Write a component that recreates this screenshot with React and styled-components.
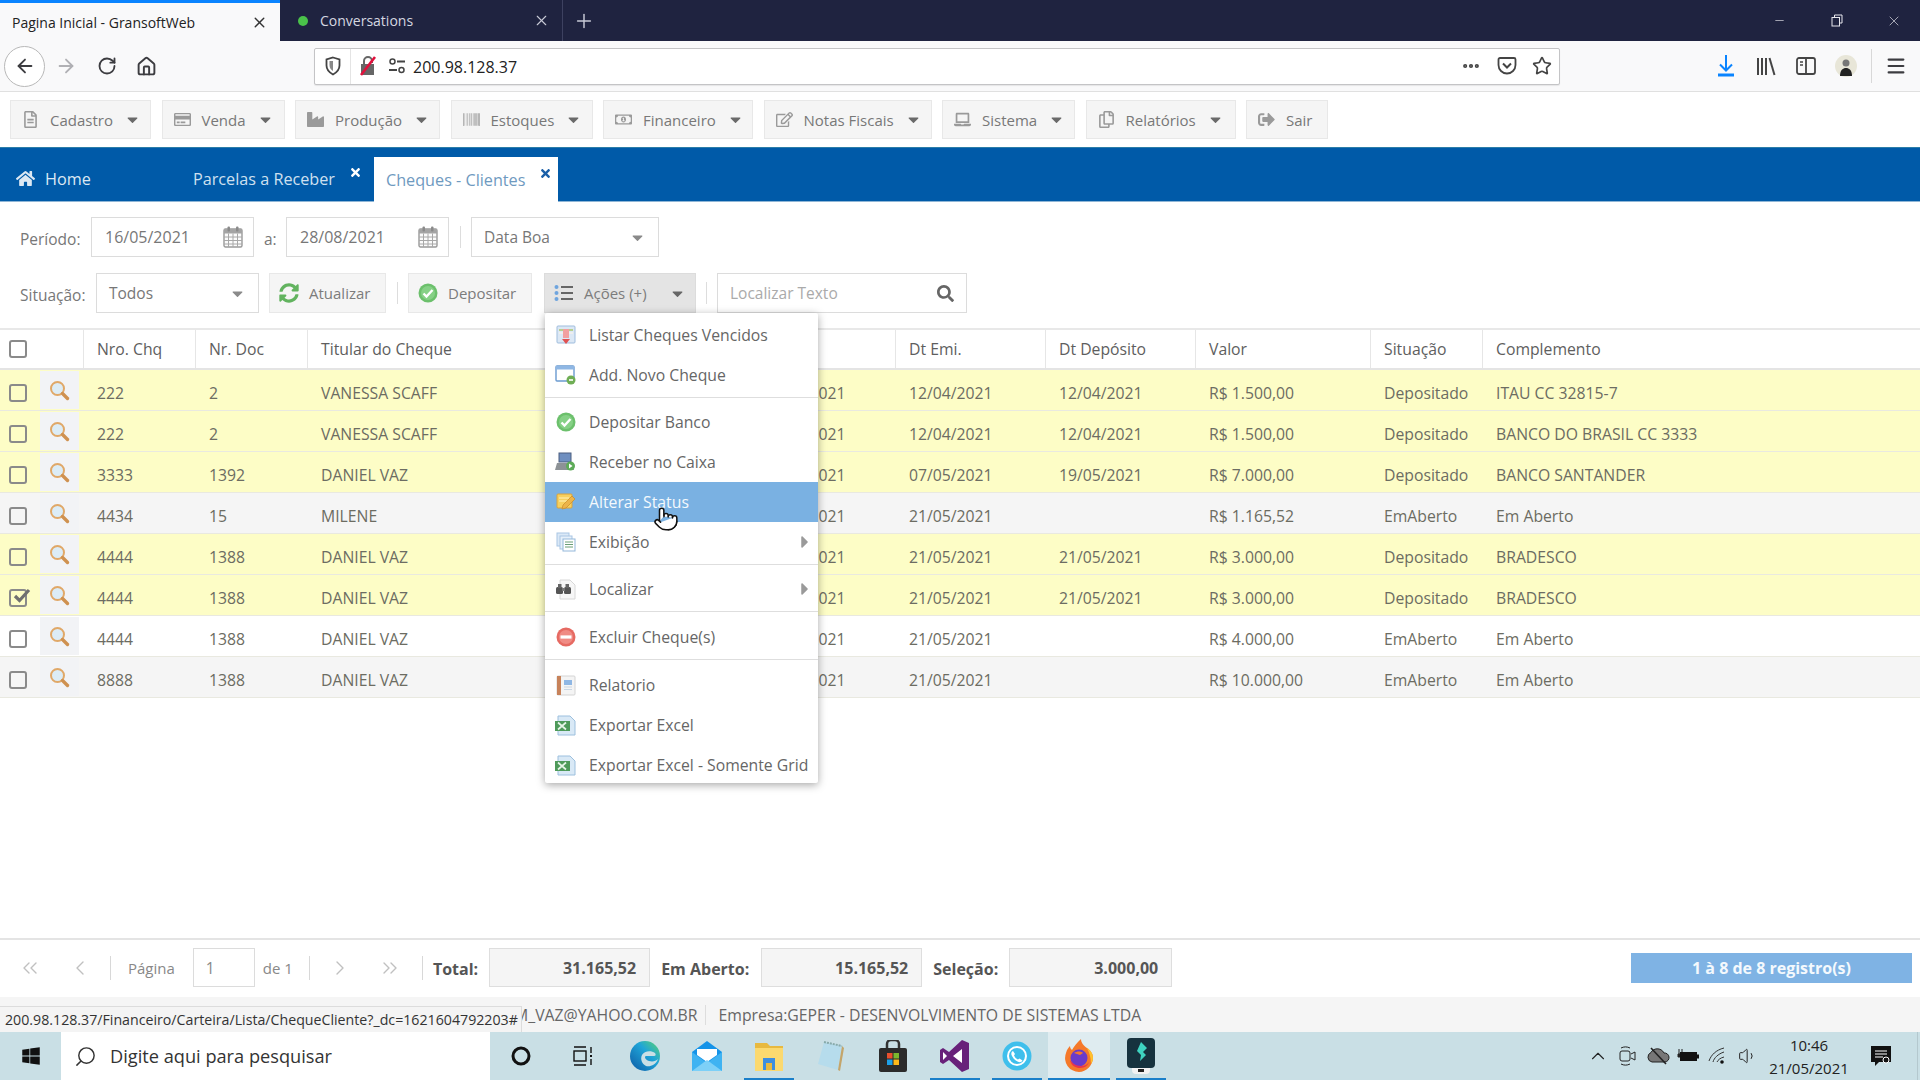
import React from 'react';
import styled, { createGlobalStyle } from 'styled-components';
import { ArrowLeft, ArrowRight, RotateCw, Home as HomeIcon, MoreHorizontal, Star, Menu as MenuLines, Minus, X, Plus, Pointer, ChevronUp, Volume1, ChevronsLeft, ChevronLeft, ChevronRight, ChevronsRight, Search as SearchLine } from 'lucide-react';
import { FaRegFileAlt, FaRegCreditCard, FaIndustry, FaBarcode, FaRegMoneyBillAlt, FaRegEdit, FaLaptop, FaRegCopy, FaSignOutAlt, FaCaretDown, FaHome, FaTimes, FaSearch, FaSyncAlt, FaCaretRight, FaWindows } from 'react-icons/fa';

const Global = createGlobalStyle`
  html, body { margin: 0; padding: 0; background: #fff; }
  * { box-sizing: border-box; }
  body { font-family: "Open Sans", "Liberation Sans", sans-serif; }
`;

const Page = styled.div`
  width: 1920px; height: 1080px; display: flex; flex-direction: column; overflow: hidden; background: #fff;
`;

/* browser chrome */
const TabStrip = styled.div`display: flex; height: 41px; background: #1f2340; align-items: stretch; flex: none;`;
const BrowserTab = styled.div`
  width: ${p => p.$w}px; display: flex; align-items: center; font-size: 14px; padding: 0 12px;
  color: ${p => p.$active ? '#222' : '#d5d7e0'};
  background: ${p => p.$active ? '#f9f9fa' : 'transparent'};
  border-top: ${p => p.$active ? '3px solid #0a84ff' : 'none'};
  border-right: ${p => p.$active ? 'none' : '1px solid #3d4160'};
  span { flex: 1; white-space: nowrap; }
`;
const TabDot = styled.i`width: 10px; height: 10px; border-radius: 50%; background: #4ac24a; margin: 0 12px 0 6px;`;
const NewTab = styled.div`width: 41px; display: flex; align-items: center; justify-content: center; color: #c8cad6;`;
const WinControls = styled.div`margin-left: auto; margin-right: -2px; display: flex; align-items: center; color: #e8e8ee;`;
const WinBtn = styled.div`width: 57px; height: 38px; display: flex; align-items: center; justify-content: center;`;

const ToolBar = styled.div`display: flex; height: 51px; flex: none; background: #f9f9fa; border-bottom: 1px solid #e0e0e0; align-items: center; padding-left: 4px; color: #3c3c40;`;
const BackBtn = styled.div`width: 41px; height: 41px; flex: none; border-radius: 50%; border: 1px solid #b8b8b8; background: #fff; display: flex; align-items: center; justify-content: center;`;
const NavCell = styled.div`width: ${p => p.$w}px; flex: none; display: flex; justify-content: center; align-items: center; color: ${p => p.$dim ? '#b0b0b4' : 'inherit'};`;
const UrlBar = styled.div`
  width: 1246px; height: 37px; margin-left: 148px; flex: none; background: #fff; border: 1px solid #c4c4c6; border-radius: 2px;
  display: flex; align-items: center; font-size: 16px; color: #222; box-shadow: 0 1px 1px rgba(0,0,0,.08);
`;
const UrlCell = styled.div`
  width: ${p => p.$w}px; height: 100%; display: flex; align-items: center; justify-content: center; flex: none;
  border-right: ${p => p.$line ? '1px solid #e4e4e4' : 'none'}; color: #444;
`;
const UrlText = styled.span`margin-left: 4px; flex: 1; padding-top: 2px;`;
const ToolCells = styled.div`display: flex; align-items: center; margin-left: 146px; flex: none;`;
const ToolDivider = styled.i`width: 1px; height: 34px; background: #d8d8d8; margin-left: 5px;`;

/* app menu */
const AppMenu = styled.nav`display: flex; height: 55px; flex: none; padding: 8px 0 0 10px; gap: 10.5px; background: #fff;`;
const AppBtn = styled.div`
  width: ${p => p.$w}px; height: 39px; background: #f5f5f5; border: 1px solid #e8e8e8; display: flex; align-items: center;
  padding: 0 12px 0 11px; gap: 11px; font-size: 15px; color: #787878; white-space: nowrap;
  svg { flex: none; color: #9a9a9a; }
  svg:last-child:not(:first-child) { color: #6a6a6a; margin-left: auto; }
`;

const TabBar = styled.div`
  display: flex; height: 55px; flex: none; background: #005aa8; border-top: 1px solid #2d7ea8; border-bottom: 1px solid #8fb6d6; align-items: flex-end;
  font-size: 16.2px; color: #cfe0f0;
`;
const HomeTab = styled.div`width: 193px; height: 45px; display: flex; align-items: center; padding-left: 16px; gap: 10px; color: #dce8f3;`;
const OpenTab = styled.div`
  position: relative; height: 45px; width: ${p => p.$w}px; display: flex; align-items: center;
  padding-left: ${p => p.$active ? 12 : 0}px; white-space: nowrap;
  background: ${p => p.$active ? '#fff' : 'transparent'};
  color: ${p => p.$active ? '#6f9abf' : '#cfe0f0'};
  margin-bottom: ${p => p.$active ? -1 : 0}px;
`;
const TabClose = styled.span`
  position: absolute; right: ${p => p.$r}px; top: 10px; display: flex;
  color: ${p => p.$active ? '#1a5fa8' : '#fff'};
`;

/* filters */
const Filters = styled.div`display: flex; flex-direction: column; gap: 16px; padding: 15px 0 0 0; height: 126px; flex: none;`;
const FilterRow = styled.div`display: flex; align-items: center; height: 40px; font-size: 15.5px; color: #777;`;
const Label = styled.span`width: ${p => p.$w}px; padding-left: ${p => p.$pl}px; flex: none; padding-top: 3px;`;
const Field = styled.div`
  width: ${p => p.$w}px; height: 40px; border: 1px solid #dcdcdc; display: flex; align-items: center; flex: none;
  padding: 0 ${p => p.$pr ?? 12}px 0 12px; background: #fff; color: #777; justify-content: space-between; white-space: nowrap;
  svg { color: #8a8a8a; }
`;
const DateText = styled.span`font-size: 16px; margin-left: 1px;`;
const Placeholder = styled.span`color: #aaa;`;
const VSep = styled.i`width: 1px; height: 22px; background: #ddd; margin: 0 ${p => p.$r}px 0 ${p => p.$l}px; flex: none;`;
const Btn = styled.div`
  position: ${p => p.$rel ? 'relative' : 'static'};
  width: ${p => p.$w}px; height: 40px; background: ${p => p.$on ? '#e4e4e4' : '#f5f5f5'}; border: 1px solid ${p => p.$on ? '#dcdcdc' : '#e8e8e8'};
  display: flex; align-items: center; gap: ${p => p.$gap ?? 10}px; padding-left: 9px; flex: none; margin-left: ${p => p.$ml || 0}px; color: #7c7c7c; font-size: 15px;
`;
const Caret = styled.span`margin-left: auto; margin-right: 9px; display: flex; color: #666;`;

/* grid */
const COLS = '83px 112px 112px 441px 147px 150px 150px 175px 112px 1fr';
const Table = styled.div`flex: 1; position: relative;`;
const HeadRow = styled.div`display: grid; grid-template-columns: ${COLS}; height: 42px; border-top: 2px solid #e8e8e8; border-bottom: 2px solid #e4e4e4;`;
const HeadCell = styled.div`
  display: flex; align-items: center; padding: 0 0 0 ${p => p.$first ? 9 : 13}px; font-size: 15.75px; color: #5e5e5e;
  border-left: ${p => p.$first ? 'none' : '1px solid #e6e6e6'}; white-space: nowrap;
`;
const Row = styled.div`
  display: grid; grid-template-columns: ${COLS}; height: 41px; border-bottom: 1px solid #e9e9e0;
  background: ${p => p.$bg};
`;
const Cell = styled.div`display: flex; align-items: center; padding: 6px 0 0 14px; font-size: 15.75px; color: #6c6c62; white-space: nowrap;`;
const SelCell = styled.div`display: flex; align-items: stretch;`;
const CheckWrap = styled.div`width: 40px; display: flex; align-items: center; padding: 6px 0 0 9px;`;
const LensCell = styled.div`width: 39px; background: #f2f3f6; margin: 1px 0; display: flex; justify-content: center; align-items: center;`;
const Check = styled.span`
  position: relative; width: 18px; height: 18px; border: 2px solid #8a8a8a; border-radius: 3px; background: ${p => p.$plain ? '#fff' : 'transparent'}; display: flex; flex: none;
`;
const TickMark = styled.span`position: absolute; left: 1px; top: -3px; display: flex;`;

/* dropdown */
const Dropdown = styled.div`
  position: absolute; left: 0; top: 39px; width: 273px; height: 470px; background: #fff; padding-top: 2px; z-index: 5;
  box-shadow: 0 2px 8px rgba(0,0,0,.35); border-radius: 2px; color: #666;
`;
const DItem = styled.div`
  position: relative; height: 40px; display: flex; align-items: center; padding-left: 10px; gap: 13px; font-size: 15.75px; white-space: nowrap;
  background: ${p => p.$active ? '#7ab1e2' : 'transparent'}; color: ${p => p.$active ? '#f4f9fd' : '#666'};
`;
const DIcon = styled.span`width: 21px; display: flex; justify-content: center; flex: none;`;
const DSep = styled.div`height: 1px; background: #dedede; margin: ${p => p.$t ?? 2}px 0 ${p => p.$b ?? 4}px;`;
const DArrow = styled.span`position: absolute; right: 3px; top: 10px; display: flex; color: #9a9a9a;`;
const HandCursor = styled.span`position: absolute; left: 108px; top: 24px; display: flex; color: #111; z-index: 6;`;

/* pager */
const Pager = styled.div`display: flex; align-items: center; height: 59px; padding-bottom: 2px; border-top: 2px solid #e4e4e4; flex: none; font-size: 15px; color: #888;`;
const PagerIcon = styled.span`width: ${p => p.$w}px; display: flex; justify-content: center; flex: none; color: #c0c0c0;`;
const PagerSep = styled.i`width: 1px; height: 24px; background: #d8d8d8; flex: none; margin-left: ${p => p.$l || 0}px;`;
const PagerText = styled.span`margin: 0 ${p => p.$r}px 0 ${p => p.$l}px; white-space: nowrap; flex: none;`;
const PageInput = styled.div`width: 62px; height: 39px; border: 1px solid #dcdcdc; padding-left: 12px; display: flex; align-items: center; flex: none; font-size: 15.5px;`;
const TotalLabel = styled.b`font-size: 16px; color: #555; margin: 3px ${p => p.$r}px 0 ${p => p.$l}px; white-space: nowrap; flex: none;`;
const TotalBox = styled.div`
  width: ${p => p.$w}px; height: 39px; background: #f5f5f5; border: 1px solid #dedede; display: flex; align-items: center; justify-content: flex-end;
  padding-right: 13px; font-size: 16px; font-weight: 700; color: #555; flex: none;
`;
const Records = styled.div`
  margin-left: auto; margin-right: 8px; width: 281px; height: 30px; background: #7fb3e4; color: #f4f9fd; font-weight: 700; font-size: 16px;
  display: flex; align-items: center; justify-content: center;
`;

/* status */
const StatusBar = styled.div`
  position: relative; height: 35px; background: #f5f5f5; display: flex; align-items: center; flex: none; font-size: 15.8px; color: #666;
  padding: 0 0 0 514px; white-space: nowrap;
`;
const StatusSep = styled.i`width: 1px; height: 20px; background: #ddd; margin: 0 12px 0 8px;`;
const UrlTip = styled.div`
  position: absolute; left: 0; bottom: 0; width: 522px; height: 26px; background: #f4f4f4; border: 1px solid #dcdcdc; border-left: none; border-bottom: none;
  font-size: 14.2px; color: #333; display: flex; align-items: center; padding-left: 5px; white-space: nowrap; z-index: 2;
`;

/* taskbar */
const Taskbar = styled.div`height: 48px; background: #c9dfe5; display: flex; align-items: stretch; flex: none; color: #111;`;
const StartBtn = styled.div`width: 61px; display: flex; align-items: center; justify-content: center;`;
const SearchBox = styled.div`
  width: 429px; background: #fff; display: flex; align-items: center; padding-left: 13px; gap: 13px; font-size: 18.2px; color: #333; white-space: nowrap; flex: none;
`;
const TaskCell = styled.div`
  position: relative; width: 62px; display: flex; align-items: center; justify-content: center; flex: none;
  background: ${p => p.$active ? '#dfecf0' : 'transparent'};
  &::after {
    content: ''; position: absolute; bottom: 0; left: ${p => p.$active ? 0 : 6}px; right: ${p => p.$active ? 0 : 6}px; height: 2px;
    background: ${p => p.$open ? '#1a7fc9' : 'transparent'};
  }
`;
const Tray = styled.div`margin-left: auto; display: flex; align-items: center; color: #222; padding-right: 10px; margin-right: 2px; border-right: 1px solid #b4c8ce;`;
const TrayCell = styled.div`width: 30px; display: flex; align-items: center; justify-content: center;`;
const Clock = styled.div`width: 92px; text-align: center; font-size: 15px; line-height: 23px; color: #222; padding-top: 2px;`;
const NoteCell = styled.div`width: 52px; display: flex; justify-content: center;`;

/* --- drawn icons --- */
const Lens = () => (
  <svg width="21" height="21" viewBox="0 0 21 21"><circle cx="8.500" cy="8.500" r="6.500" fill="#dcecf6" stroke="#e0a868" strokeWidth="2" /><path d="M13.500 13.500L18.500 18.500" stroke="#cf9150" strokeWidth="3.400" strokeLinecap="round" /></svg>
);
const Tick = () => <svg width="20" height="17" viewBox="0 0 20 17"><path d="M3 8l4.500 4.500L17 2" fill="none" stroke="#707070" strokeWidth="3.200" /></svg>;
const CalendarGrid = () => (
  <svg width="20" height="22" viewBox="0 0 20 22"><rect x="1" y="3" width="18" height="18" rx="1.500" fill="#fbfbfb" stroke="#9a9a9a" strokeWidth="1.400" /><rect x="1" y="3" width="18" height="4.500" fill="#a4a4a4" /><path d="M1 11h18M1 14.500h18M1 18h18M5.500 7.500V21M10 7.500V21M14.500 7.500V21" stroke="#a8a8a8" /><rect x="4.500" y="0.500" width="2.500" height="5" rx="1" fill="#8a8a8a" /><rect x="13" y="0.500" width="2.500" height="5" rx="1" fill="#8a8a8a" /></svg>
);
const ListDots = () => (
  <svg width="19" height="18" viewBox="0 0 19 18"><circle cx="2.500" cy="3" r="2" fill="#6ea4de" /><circle cx="2.500" cy="9" r="2" fill="#6ea4de" /><circle cx="2.500" cy="15" r="2" fill="#6ea4de" /><path d="M7 3h12M7 9h12M7 15h12" stroke="#666" strokeWidth="1.800" /></svg>
);
const GreenCheck = ({ s = 20 }) => (
  <svg width={s} height={s} viewBox="0 0 20 20"><circle cx="10" cy="10" r="9.500" fill="#6cc06c" /><circle cx="10" cy="10" r="7" fill="#86d186" /><path d="M5.500 10.500l3 3 6-6.500" fill="none" stroke="#fff" strokeWidth="2.400" /></svg>
);
const IcoList = () => (
  <svg width="20" height="20" viewBox="0 0 20 20"><rect x="1" y="1" width="18" height="17" rx="1" fill="#dce8f5" stroke="#9fbddd" /><rect x="3" y="4" width="14" height="2" fill="#b7d08f" /><rect x="3" y="7" width="14" height="2" fill="#eee" /><rect x="7" y="4" width="6" height="9" fill="#f2a0a0" /><path d="M10 19l-4-5h8z" fill="#e05252" /></svg>
);
const IcoAdd = () => (
  <svg width="21" height="20" viewBox="0 0 21 20"><rect x="1" y="1" width="18" height="15" rx="1" fill="#fff" stroke="#6a9ad0" strokeWidth="1.400" /><rect x="1" y="1" width="18" height="3.500" fill="#8fb7e4" /><circle cx="16" cy="15" r="4.500" fill="#6fae55" /><path d="M14 15h4" stroke="#fff" strokeWidth="1.600" /></svg>
);
const IcoCash = () => (
  <svg width="21" height="20" viewBox="0 0 21 20"><rect x="4" y="1" width="12" height="9" fill="#6f8fc0" stroke="#4c5f80" /><path d="M2 11h15l2 7H0z" fill="#8d9296" /><circle cx="15.500" cy="14" r="4.500" fill="#5dab58" /><path d="M14 11.500l3.500 2.500L14 16.500z" fill="#fff" /></svg>
);
const IcoNote = () => (
  <svg width="20" height="20" viewBox="0 0 20 20"><rect x="1" y="2" width="15" height="14" rx="1" fill="#f7d05e" stroke="#d9a23a" /><path d="M3 6h10M3 9h8" stroke="#fff2b8" /><path d="M6 17l1-4 9-9 3 3-9 9z" fill="#ecb44a" stroke="#c98a25" strokeWidth=".7" /></svg>
);
const IcoPages = () => (
  <svg width="20" height="20" viewBox="0 0 20 20"><rect x="1" y="1" width="12" height="13" fill="#dbe9f7" stroke="#a9c6e4" /><rect x="4" y="4" width="12" height="13" fill="#e6f0fa" stroke="#a9c6e4" /><rect x="7" y="7" width="12" height="12" fill="#fff" stroke="#93b7da" /><path d="M9 10h8M9 12.500h8M9 15h8" stroke="#6b9e76" /></svg>
);
const IcoFind = () => (
  <svg width="20" height="21" viewBox="0 0 20 21"><path d="M4 1h10l5 5v14H4z" fill="#f7f7f7" stroke="#d8d8d8" /><rect x="0" y="8" width="7" height="7" rx="1.500" fill="#555" /><rect x="8" y="8" width="7" height="7" rx="1.500" fill="#555" /><rect x="2" y="5" width="3.500" height="4" fill="#666" /><rect x="9.500" y="5" width="3.500" height="4" fill="#666" /><rect x="6" y="9" width="3" height="3" fill="#777" /></svg>
);
const IcoDel = () => (
  <svg width="20" height="20" viewBox="0 0 20 20"><circle cx="10" cy="10" r="9.500" fill="#e66a62" /><circle cx="10" cy="10" r="7" fill="#f08b84" /><rect x="4.500" y="8.400" width="11" height="3.200" fill="#fff" /></svg>
);
const IcoBook = () => (
  <svg width="20" height="21" viewBox="0 0 20 21"><rect x="1" y="1" width="18" height="19" rx="1" fill="#f4f4f4" stroke="#d4d4d4" /><rect x="1" y="1" width="4" height="19" fill="#c7825a" /><rect x="8" y="5" width="8" height="5" fill="#8fb7e4" /><path d="M8 12h8M8 14.500h8" stroke="#c9d6e4" /></svg>
);
const IcoExcel = () => (
  <svg width="21" height="21" viewBox="0 0 21 21"><path d="M3 1h12l5 5v14H3z" fill="#d9e9f6" stroke="#9dc0de" /><rect x="0" y="6" width="15" height="10" fill="#4e9a5a" /><path d="M3 7.500l8 7M11 7.500l-8 7" stroke="#e6f4e8" strokeWidth="1.700" /></svg>
);
const WinLogo = () => <FaWindows size={20} color="#111" />;

const Shield = () => <svg width="18" height="20" viewBox="0 0 18 20"><path d="M9 1.500l6.500 2v6c0 4.500-3 7-6.500 9-3.500-2-6.500-4.500-6.500-9v-6z" fill="none" stroke="#444" strokeWidth="1.800" /><path d="M9 5v10c-2-1-3.500-3-3.500-6V5z" fill="#888" /></svg>;
const LockOff = () => <svg width="20" height="22" viewBox="0 0 20 22"><path d="M3 9h13v11H3z" fill="#666" /><path d="M6 9V6a4 4 0 018 0v2" fill="none" stroke="#666" strokeWidth="2" /><path d="M3 20L17 2" stroke="#e0103c" strokeWidth="2.600" /></svg>;
const Perm = () => <svg width="18" height="18" viewBox="0 0 18 18"><circle cx="4.500" cy="4.500" r="2.500" fill="none" stroke="#444" strokeWidth="1.500" /><path d="M9 4.500h8M1 13h8" stroke="#444" strokeWidth="1.800" /><circle cx="13.500" cy="13" r="2.500" fill="none" stroke="#444" strokeWidth="1.500" /></svg>;
const Pocket = () => <svg width="20" height="20" viewBox="0 0 20 20"><path d="M3 2h14a1.500 1.500 0 011.500 1.500V9a8.500 8.500 0 01-17 0V3.500A1.500 1.500 0 013 2z" fill="none" stroke="#444" strokeWidth="1.800" /><path d="M6 7.500l4 4 4-4" fill="none" stroke="#444" strokeWidth="2" /></svg>;
const Download = () => <svg width="20" height="24" viewBox="0 0 20 24"><path d="M10 1v15M4 10.500l6 6 6-6" fill="none" stroke="#0a84ff" strokeWidth="2" /><path d="M2 21h16" stroke="#0a84ff" strokeWidth="3" /></svg>;
const Library = () => <svg width="22" height="20" viewBox="0 0 22 20"><path d="M3 2v17M7 2v17M11 2v17" stroke="#444" strokeWidth="2" /><path d="M14.500 2l5 17" stroke="#444" strokeWidth="2" /></svg>;
const SidebarIco = () => <svg width="20" height="20" viewBox="0 0 20 20"><rect x="1" y="2" width="18" height="16" rx="2" fill="none" stroke="#444" strokeWidth="1.800" /><path d="M10 2v16" stroke="#444" strokeWidth="1.800" /><path d="M4 6h3M4 9h3" stroke="#444" strokeWidth="1.400" /></svg>;
const Avatar = () => <svg width="22" height="22" viewBox="0 0 22 22"><circle cx="11" cy="11" r="11" fill="#e8e6d8" /><circle cx="11" cy="8" r="3.500" fill="#777" /><path d="M5 21c0-6 3-8 6-8s6 2 6 8z" fill="#222" /></svg>;
const Restore = () => <svg width="12" height="13" viewBox="0 0 12 13"><rect x="1" y="3.500" width="7.500" height="8.500" fill="none" stroke="#e8e8ee" /><path d="M3.500 3.500V1H11v8H8.500" fill="none" stroke="#e8e8ee" /></svg>;

const Cortana = () => <svg width="22" height="22" viewBox="0 0 22 22"><circle cx="11" cy="11" r="8" fill="none" stroke="#111" strokeWidth="3" /></svg>;
const TaskView = () => <svg width="24" height="24" viewBox="0 0 24 24"><rect x="3" y="7" width="12" height="10" fill="none" stroke="#111" strokeWidth="1.400" /><path d="M3 3h12M3 21h12M20 3v6M20 15v6" stroke="#111" strokeWidth="1.400" /><rect x="19" y="11" width="2" height="2" fill="#111" /></svg>;
const Edge = () => <svg width="32" height="32" viewBox="0 0 32 32"><defs><linearGradient id="eg" x1="0" y1="1" x2="1" y2="0"><stop offset="0" stopColor="#0c59a4" /><stop offset=".6" stopColor="#1fa5d8" /><stop offset="1" stopColor="#5ed46e" /></linearGradient></defs><circle cx="16" cy="16" r="15" fill="url(#eg)" /><path d="M13 15c2-4 9-5 13-2 1 1 1 3-1 3h-8c-2 0-1 4 3 5 4 1 7 0 9-2-2 6-8 8-12 7-4-2-6-7-4-11z" fill="#c9dfe5" /></svg>;
const Mail = () => <svg width="32" height="30" viewBox="0 0 32 30"><path d="M1 11L16 0l15 11v19H1z" fill="#1593e8" /><path d="M1 11l15 11 15-11v19H1z" fill="#3fb3f2" /><path d="M6 8h20v6l-10 7-10-7z" fill="#fff" /><path d="M1 30l15-11 15 11z" fill="#7dd0f7" /></svg>;
const Folder = () => <svg width="30" height="30" viewBox="0 0 30 30"><path d="M1 2h12l3 3h13v25H1z" fill="#e8b93f" /><rect x="1" y="7" width="28" height="23" fill="#fbd96f" /><rect x="9" y="17" width="12" height="12" fill="#3d8ee0" /><rect x="12" y="22" width="6" height="7" fill="#e8b93f" /></svg>;
const Notepad = () => <svg width="30" height="32" viewBox="0 0 30 32"><path d="M8 2l18 4-4 24L2 24z" fill="#b6dcec" /><path d="M26 6l2 2-4 23-2-1z" fill="#c4a56a" /><path d="M8 2l18 4" stroke="#8aa" strokeWidth="2" strokeDasharray="2 1" /></svg>;
const Store = () => <svg width="30" height="32" viewBox="0 0 30 32"><path d="M9 9V4a4 4 0 014-4h4a4 4 0 014 4v5" fill="none" stroke="#333" strokeWidth="2.500" /><rect x="1" y="8" width="28" height="24" rx="2" fill="#2b2b2b" /><rect x="9" y="13" width="5.500" height="5.500" fill="#e8502e" /><rect x="15.500" y="13" width="5.500" height="5.500" fill="#7bb82e" /><rect x="9" y="19.500" width="5.500" height="5.500" fill="#1da0e8" /><rect x="15.500" y="19.500" width="5.500" height="5.500" fill="#fcb81a" /></svg>;
const VS = () => <svg width="30" height="32" viewBox="0 0 30 32"><path d="M22 0l7 3v26l-7 3-13-12-6 4-3-2V10l3-2 6 4z" fill="#68217a" /><path d="M22 9L13 16l9 7zM3 12v8l4-4z" fill="#fff" /></svg>;
const Chat = () => <svg width="30" height="30" viewBox="0 0 30 30"><circle cx="15" cy="15" r="14.500" fill="#3fbfec" /><circle cx="15" cy="15" r="9" fill="none" stroke="#fff" strokeWidth="2" /><path d="M11 10l2 3-1 1.500c1 2 2 3 4 4l1.500-1 3 2c-1 2-3 2-5 1-3-1.500-5-4-6-6.500-.5-1.500 0-3.500 1.500-4z" fill="#fff" /></svg>;
const Firefox = () => <svg width="30" height="34" viewBox="0 0 30 34"><path d="M15 33A14 14 0 012 14c1-4 3-6 4-7 0 2 1 3 2 4 2-4 5-7 9-11 0 4 3 7 6 9 3 2 6 5 6 10a15 15 0 01-14 14z" fill="#f5792a" /><path d="M23 9c3 2 6 5 6 10 0 2-1 4-2 6 0-7-2-12-4-16z" fill="#ffc22e" /><circle cx="15" cy="19" r="8.500" fill="#6b3bc9" /><path d="M10 14c3-2 7-2 9 0l-3 2z" fill="#f5792a" /><path d="M6 21c1 6 6 8 10 8 5 0 8-3 9-6-2 3-5 4-8 4-5 0-9-3-11-6z" fill="#e8364d" /></svg>;
const AppBox = () => <svg width="30" height="36" viewBox="0 0 30 36"><rect x="1" y="0" width="28" height="30" rx="4" fill="#16323e" /><path d="M6 30h18v2a4 4 0 01-4 4h-10a4 4 0 01-4-4z" fill="#f2f2f2" /><path d="M15 4l6 6-4 4 3 3-6 6 1-6-4-4z" fill="#3ed3c0" /><rect x="12" y="31" width="6" height="3" fill="#222" /></svg>;

const Meet = () => <svg width="20" height="22" viewBox="0 0 20 22"><rect x="2" y="6" width="10" height="10" rx="2" fill="none" stroke="#222" /><path d="M13 9l4-2v8l-4-2" fill="none" stroke="#222" /><path d="M3 3c3-1.500 6-1.500 9 0M3 19c3 1.500 6 1.500 9 0" fill="none" stroke="#222" /></svg>;
const CloudOff = () => <svg width="24" height="18" viewBox="0 0 24 18"><path d="M6 15a5 5 0 01-1-9.500C7 1 15 0 18 6a4.500 4.500 0 011 9z" fill="#777" stroke="#222" /><path d="M5 1l15 16" stroke="#222" strokeWidth="1.600" /></svg>;
const Battery = () => <svg width="22" height="16" viewBox="0 0 22 16"><path d="M2 1v5M5 1v5M1 6h5v3H1z" fill="#222" stroke="#222" /><rect x="3" y="4" width="17" height="9" fill="#111" /><rect x="20" y="6.500" width="2" height="4" fill="#111" /></svg>;
const Wifi = () => <svg width="20" height="18" viewBox="0 0 20 18"><path d="M1 14C3 8 8 3 16 1M5 15c1-4 5-8 11-10M9 15c1-2 3-4 7-5" fill="none" stroke="#333" /><circle cx="14" cy="15" r="1.800" fill="#111" /></svg>;
const Notif = () => <svg width="22" height="22" viewBox="0 0 22 22"><path d="M1 1h20v16H9l-4 4v-4H1z" fill="#111" /><path d="M5 6h12M5 9h12M5 12h8" stroke="#fff" /><circle cx="16" cy="15" r="3" fill="#111" stroke="#fff" /></svg>;

const menuButtons = [
  ['Cadastro', 141, FaRegFileAlt], ['Venda', 123, FaRegCreditCard], ['Produção', 145, FaIndustry], ['Estoques', 142, FaBarcode],
  ['Financeiro', 150, FaRegMoneyBillAlt], ['Notas Fiscais', 168, FaRegEdit], ['Sistema', 133, FaLaptop], ['Relatórios', 150, FaRegCopy],
];

const rows = [
  ['222', '2', 'VANESSA SCAFF', '12/04/2021', '12/04/2021', '12/04/2021', 'R$ 1.500,00', 'Depositado', 'ITAU CC 32815-7', 'y'],
  ['222', '2', 'VANESSA SCAFF', '12/04/2021', '12/04/2021', '12/04/2021', 'R$ 1.500,00', 'Depositado', 'BANCO DO BRASIL CC 3333', 'y'],
  ['3333', '1392', 'DANIEL VAZ', '07/05/2021', '07/05/2021', '19/05/2021', 'R$ 7.000,00', 'Depositado', 'BANCO SANTANDER', 'y'],
  ['4434', '15', 'MILENE', '21/05/2021', '21/05/2021', '', 'R$ 1.165,52', 'EmAberto', 'Em Aberto', 'g'],
  ['4444', '1388', 'DANIEL VAZ', '21/05/2021', '21/05/2021', '21/05/2021', 'R$ 3.000,00', 'Depositado', 'BRADESCO', 'y'],
  ['4444', '1388', 'DANIEL VAZ', '21/05/2021', '21/05/2021', '21/05/2021', 'R$ 3.000,00', 'Depositado', 'BRADESCO', 'y', true],
  ['4444', '1388', 'DANIEL VAZ', '21/05/2021', '21/05/2021', '', 'R$ 4.000,00', 'EmAberto', 'Em Aberto', 'w'],
  ['8888', '1388', 'DANIEL VAZ', '21/05/2021', '21/05/2021', '', 'R$ 10.000,00', 'EmAberto', 'Em Aberto', 'g'],
];
const rowBg = { y: '#fdfdc6', g: '#f5f5f5', w: '#ffffff' };
const headers = ['Nro. Chq', 'Nr. Doc', 'Titular do Cheque', 'Vcto', 'Dt Emi.', 'Dt Depósito', 'Valor', 'Situação', 'Complemento'];

export default function App() {
  return (
    <Page>
      <Global />
      <TabStrip>
        <BrowserTab $w={280} $active><span>Pagina Inicial - GransoftWeb</span><X size={17} strokeWidth={2} color="#333" /></BrowserTab>
        <BrowserTab $w={283}><TabDot /><span>Conversations</span><X size={17} strokeWidth={1.6} color="#c8cad6" /></BrowserTab>
        <NewTab><Plus size={22} strokeWidth={1.6} /></NewTab>
        <WinControls>
          <WinBtn><Minus size={13} strokeWidth={1.2} /></WinBtn>
          <WinBtn><Restore /></WinBtn>
          <WinBtn><X size={16} strokeWidth={1} /></WinBtn>
        </WinControls>
      </TabStrip>
      <ToolBar>
        <BackBtn><ArrowLeft size={22} strokeWidth={2} /></BackBtn>
        <NavCell $w={42} $dim><ArrowRight size={22} strokeWidth={2} /></NavCell>
        <NavCell $w={39}><RotateCw size={20} strokeWidth={2.2} /></NavCell>
        <NavCell $w={40}><HomeIcon size={21} strokeWidth={2.2} /></NavCell>
        <UrlBar>
          <UrlCell $w={36} $line><Shield /></UrlCell>
          <UrlCell $w={34}><LockOff /></UrlCell>
          <UrlCell $w={24}><Perm /></UrlCell>
          <UrlText>200.98.128.37</UrlText>
          <UrlCell $w={36}><MoreHorizontal size={20} strokeWidth={3} /></UrlCell>
          <UrlCell $w={36}><Pocket /></UrlCell>
          <UrlCell $w={34}><Star size={20} strokeWidth={2} /></UrlCell>
        </UrlBar>
        <ToolCells>
          <NavCell $w={40}><Download /></NavCell>
          <NavCell $w={40}><Library /></NavCell>
          <NavCell $w={40}><SidebarIco /></NavCell>
          <NavCell $w={40}><Avatar /></NavCell>
          <ToolDivider />
          <NavCell $w={48}><MenuLines size={22} strokeWidth={2.4} /></NavCell>
        </ToolCells>
      </ToolBar>

      <AppMenu>
        {menuButtons.map(([t, w, I]) => (
          <AppBtn key={t} $w={w}><I size={17} /> {t} <FaCaretDown size={17} /></AppBtn>
        ))}
        <AppBtn $w={82}><FaSignOutAlt size={17} /> Sair</AppBtn>
      </AppMenu>

      <TabBar>
        <HomeTab><FaHome size={19} /> Home</HomeTab>
        <OpenTab $w={181}>Parcelas a Receber<TabClose $r={12}><FaTimes size={13} /></TabClose></OpenTab>
        <OpenTab $w={184} $active>Cheques - Clientes<TabClose $r={6} $active><FaTimes size={13} /></TabClose></OpenTab>
      </TabBar>

      <Filters>
        <FilterRow>
          <Label $w={91} $pl={20}>Período:</Label>
          <Field $w={163} $pr={10}><DateText>16/05/2021</DateText> <CalendarGrid /></Field>
          <Label $w={32} $pl={10}>a:</Label>
          <Field $w={163} $pr={10}><DateText>28/08/2021</DateText> <CalendarGrid /></Field>
          <VSep $l={11} $r={10} />
          <Field $w={188}>Data Boa <FaCaretDown size={17} /></Field>
        </FilterRow>
        <FilterRow>
          <Label $w={96} $pl={20}>Situação:</Label>
          <Field $w={163}>Todos <FaCaretDown size={17} /></Field>
          <Btn $w={117} $ml={10}><FaSyncAlt size={20} color="#62b35f" /> Atualizar</Btn>
          <VSep $l={11} $r={10} />
          <Btn $w={124}><GreenCheck /> Depositar</Btn>
          <Btn $w={152} $ml={12} $on $rel $gap={11}>
            <ListDots /> Ações (+)
            <Caret><FaCaretDown size={17} /></Caret>
            <Dropdown>
              <DItem><DIcon><IcoList /></DIcon> Listar Cheques Vencidos</DItem>
              <DItem><DIcon><IcoAdd /></DIcon> Add. Novo Cheque</DItem>
              <DSep />
              <DItem><DIcon><GreenCheck /></DIcon> Depositar Banco</DItem>
              <DItem><DIcon><IcoCash /></DIcon> Receber no Caixa</DItem>
              <DItem $active><DIcon><IcoNote /></DIcon> Alterar Status<HandCursor><Pointer size={26} strokeWidth={1.4} fill="#fff" /></HandCursor></DItem>
              <DItem><DIcon><IcoPages /></DIcon> Exibição<DArrow><FaCaretRight size={20} /></DArrow></DItem>
              <DSep />
              <DItem><DIcon><IcoFind /></DIcon> Localizar<DArrow><FaCaretRight size={20} /></DArrow></DItem>
              <DSep $b={5} />
              <DItem><DIcon><IcoDel /></DIcon> Excluir Cheque(s)</DItem>
              <DSep $b={5} />
              <DItem><DIcon><IcoBook /></DIcon> Relatorio</DItem>
              <DItem><DIcon><IcoExcel /></DIcon> Exportar Excel</DItem>
              <DItem><DIcon><IcoExcel /></DIcon> Exportar Excel - Somente Grid</DItem>
            </Dropdown>
          </Btn>
          <VSep $l={10} $r={10} />
          <Field $w={250}><Placeholder>Localizar Texto</Placeholder><FaSearch size={17} color="#666" /></Field>
        </FilterRow>
      </Filters>

      <Table>
        <HeadRow>
          <HeadCell $first><Check $plain /></HeadCell>
          {headers.map(h => <HeadCell key={h}>{h}</HeadCell>)}
        </HeadRow>
        {rows.map((r, i) => (
          <Row key={i} $bg={rowBg[r[9]]}>
            <SelCell>
              <CheckWrap><Check>{r[10] && <TickMark><Tick /></TickMark>}</Check></CheckWrap>
              <LensCell><Lens /></LensCell>
            </SelCell>
            {r.slice(0, 9).map((v, j) => <Cell key={j}>{v}</Cell>)}
          </Row>
        ))}
      </Table>

      <Pager>
        <PagerIcon $w={60}><ChevronsLeft size={24} strokeWidth={1.4} /></PagerIcon>
        <PagerIcon $w={40}><ChevronLeft size={24} strokeWidth={1.4} /></PagerIcon>
        <PagerSep $l={10} />
        <PagerText $l={17} $r={18}>Página</PagerText>
        <PageInput>1</PageInput>
        <PagerText $l={8} $r={16}>de 1</PagerText>
        <PagerSep />
        <PagerIcon $w={60}><ChevronRight size={24} strokeWidth={1.4} /></PagerIcon>
        <PagerIcon $w={40}><ChevronsRight size={24} strokeWidth={1.4} /></PagerIcon>
        <PagerSep $l={12} />
        <TotalLabel $l={10} $r={11}>Total:</TotalLabel>
        <TotalBox $w={161}>31.165,52</TotalBox>
        <TotalLabel $l={11} $r={12}>Em Aberto:</TotalLabel>
        <TotalBox $w={161}>15.165,52</TotalBox>
        <TotalLabel $l={11} $r={11}>Seleção:</TotalLabel>
        <TotalBox $w={163}>3.000,00</TotalBox>
        <Records>1 à 8 de 8 registro(s)</Records>
      </Pager>

      <StatusBar>
        <span>M_VAZ@YAHOO.COM.BR</span><StatusSep /><span>Empresa:GEPER - DESENVOLVIMENTO DE SISTEMAS LTDA</span>
        <UrlTip>200.98.128.37/Financeiro/Carteira/Lista/ChequeCliente?_dc=1621604792203#</UrlTip>
      </StatusBar>

      <Taskbar>
        <StartBtn><WinLogo /></StartBtn>
        <SearchBox><SearchLine size={23} strokeWidth={1.5} style={{ transform: 'scaleX(-1)' }} /> Digite aqui para pesquisar</SearchBox>
        <TaskCell><Cortana /></TaskCell>
        <TaskCell><TaskView /></TaskCell>
        <TaskCell><Edge /></TaskCell>
        <TaskCell><Mail /></TaskCell>
        <TaskCell $open><Folder /></TaskCell>
        <TaskCell><Notepad /></TaskCell>
        <TaskCell><Store /></TaskCell>
        <TaskCell $open><VS /></TaskCell>
        <TaskCell $open><Chat /></TaskCell>
        <TaskCell $open $active><Firefox /></TaskCell>
        <TaskCell $open><AppBox /></TaskCell>
        <Tray>
          <TrayCell><ChevronUp size={22} strokeWidth={1.2} /></TrayCell>
          <TrayCell><Meet /></TrayCell>
          <TrayCell><CloudOff /></TrayCell>
          <TrayCell><Battery /></TrayCell>
          <TrayCell><Wifi /></TrayCell>
          <TrayCell><Volume1 size={20} strokeWidth={1.2} /></TrayCell>
          <Clock>10:46<br />21/05/2021</Clock>
          <NoteCell><Notif /></NoteCell>
        </Tray>
      </Taskbar>
    </Page>
  );
}
